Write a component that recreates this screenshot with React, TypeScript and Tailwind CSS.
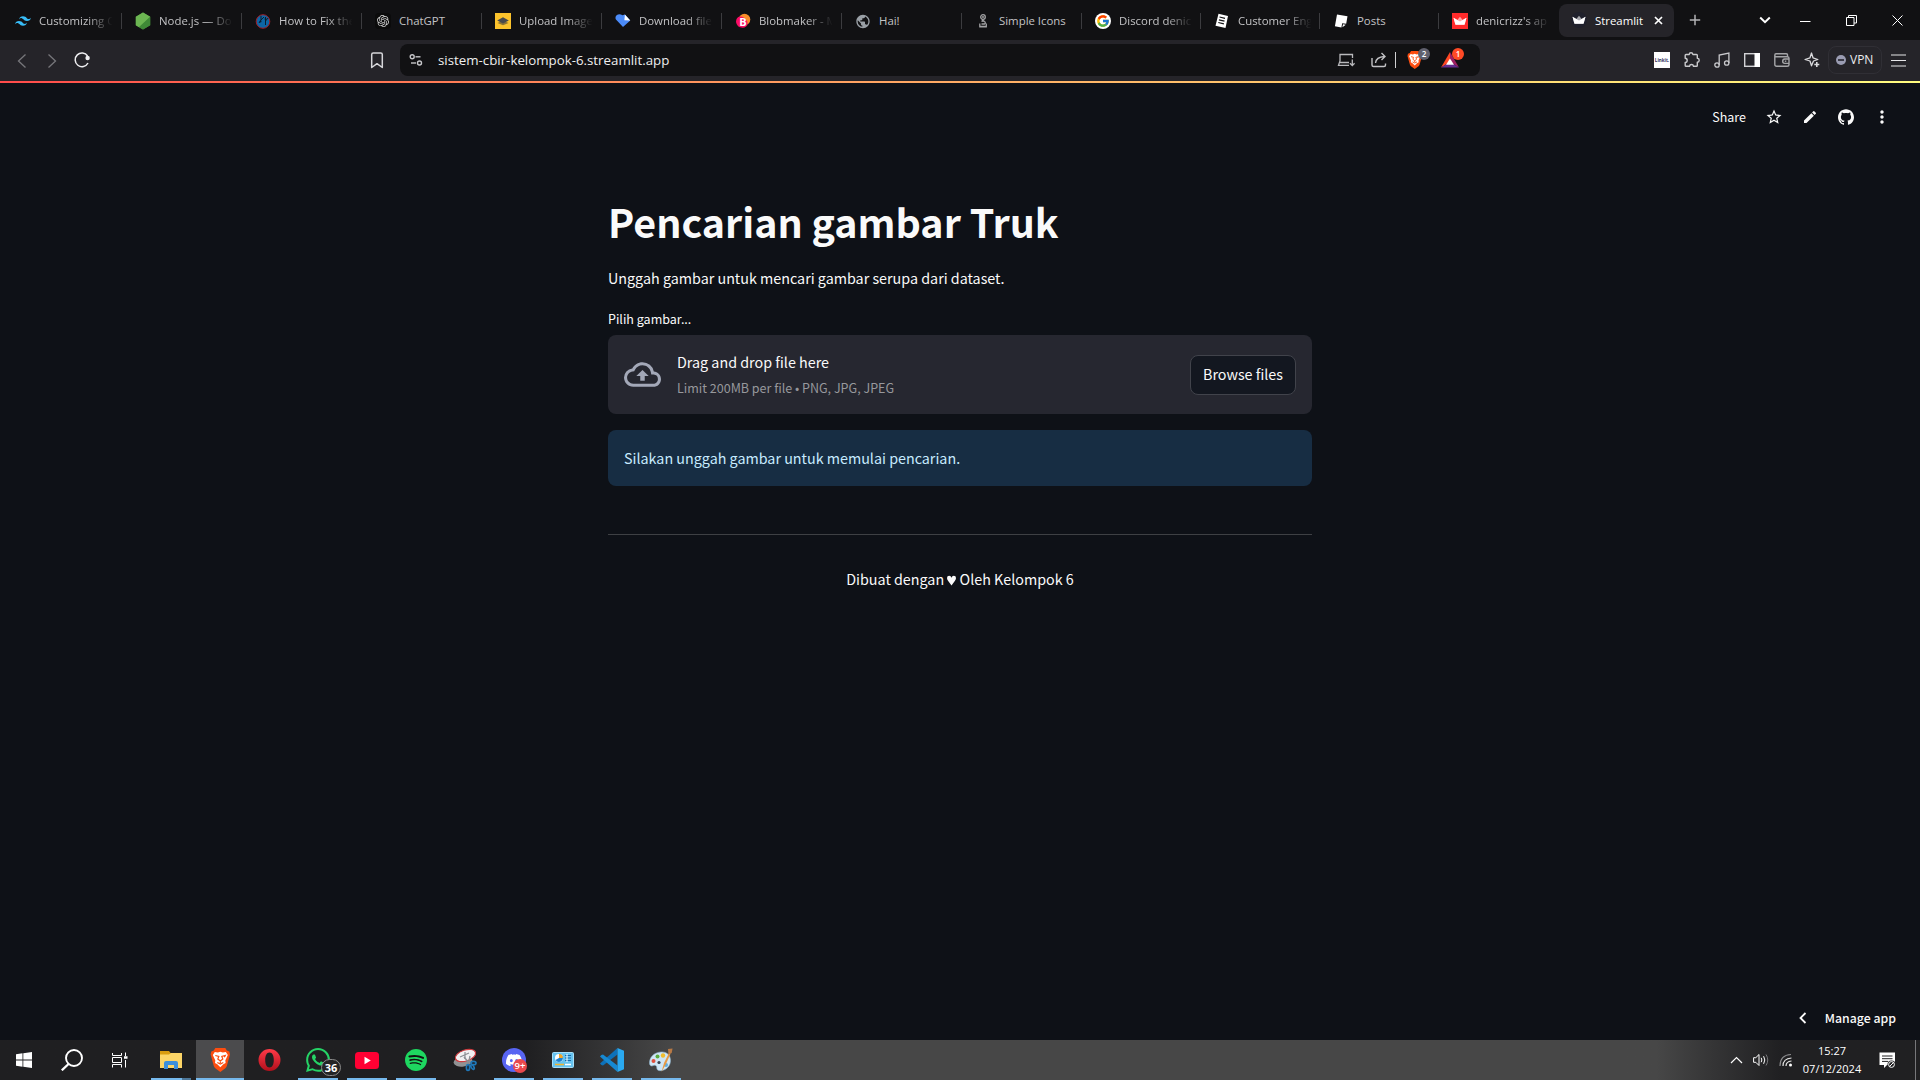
import type { ReactNode } from "react";
import {
  SiTailwindcss,
  SiOpenai,
  SiSpotify,
  SiDiscord,
  SiWhatsapp,
  SiGithub,
} from "react-icons/si";
import { MdOutlineCloudUpload, MdStarBorder, MdEdit, MdMoreVert, MdPublic } from "react-icons/md";
import { FcGoogle } from "react-icons/fc";

/* ---------- Tab favicons ---------- */

const Crown = ({ fill }: { fill: string }) => (
  <svg width="16" height="16" viewBox="0 0 16 16">
    <path d="M1.5 4.8 5.3 7 8 3.8 10.7 7l3.8-2.2-1.8 6.4q-.2.6-.8.6H4.1q-.6 0-.8-.6z" fill={fill} opacity=".75" />
    <path d="M1.500 4.800 8 8.500l6.500-3.700-1.800 6.400q-.2.600-.8.600H4.100q-.6 0-.8-.6z" fill="#fff" />
  </svg>
);

const NodeIcon = () => (
  <svg width="16" height="18" viewBox="0 0 16 18">
    <path d="M8 .5 15.200 4.700v8.600L8 17.500.8 13.300V4.700z" fill="#4c9a3c" />
    <path d="M8 .5 15.200 4.700 4 15.200.8 13.300V4.700z" fill="#6cb652" />
    <path d="M15.200 4.700v8.600L8 17.500 4 15.200z" fill="#3f8a37" />
  </svg>
);

const GlobeRed = () => (
  <svg width="16" height="16" viewBox="0 0 16 16">
    <circle cx="8" cy="8.500" r="6.800" fill="#0d66a5" stroke="#a31d26" strokeWidth="1" />
    <path d="M6 3v4l-2 3M6 7l3-3M10.500 4v8M10.500 8l2.500-3" stroke="#0c1c2c" strokeWidth="1" fill="none" />
    <circle cx="5.500" cy="8.500" r="1" fill="#0c1c2c" />
    <circle cx="10.500" cy="6" r="1" fill="#0c1c2c" />
  </svg>
);

const Upload = () => (
  <svg width="16" height="16" viewBox="0 0 16 16">
    <rect width="16" height="16" fill="#fcc32c" />
    <path d="M8 7.500 13.500 10 8 12.300 2.500 10z" fill="#8d7434" />
    <path d="M8 4.300 13.800 7.500 8 10.500 2.200 7.500z" fill="#494a4c" />
  </svg>
);

const Heart = () => (
  <svg width="17" height="16" viewBox="0 0 17 16">
    <path d="M8.500 14.500 1 6.500Q-.4 3.500 2 1.500 5-.2 8 2l2.500-1 5.700 6.400z" fill="#4b8bf9" />
    <path d="M10.500 1.200 16.200 7.400 10 7.200z" fill="#fff" />
  </svg>
);

const Blob = () => (
  <span className="relative flex h-4 w-4 items-center justify-center">
    <svg className="absolute inset-0" width="16" height="16" viewBox="0 0 16 16">
      <circle cx="9.500" cy="6.500" r="5.800" fill="#f98e2b" />
      <path d="M1 9Q1 4 5 3.500q4.500 0 7 4.500 2 4.500-2.500 6.500Q2 15.500 1 9z" fill="#fb0d63" />
    </svg>
    <span className="relative font-['Open_Sans',sans-serif] text-[11px] leading-none font-bold text-white">B</span>
  </span>
);

const Chain = () => (
  <svg width="16" height="16" viewBox="0 0 16 16" fill="none" stroke="#a2a2a4" strokeWidth="1.300">
    <circle cx="8" cy="4" r="2.300" />
    <circle cx="8" cy="4" r=".4" />
    <path d="M6.800 6.500 9.500 8.500M6.500 8.500q1.500-1 3 0t0 2.500H6.500M4.800 10.500v3h6.500v-3M4.300 13.800h7.500" />
  </svg>
);

const DocIcon = () => (
  <svg width="16" height="16" viewBox="0 0 16 16">
    <path d="M4.500.8 14 3 11.500 15 1.500 12.800z" fill="#fff" />
    <path d="m5.500 4 5.500 1.300M4.900 6.800l5.600 1.300M4.300 9.500l5.600 1.300" stroke="#111113" strokeWidth="1.200" />
  </svg>
);

const PostIcon = () => (
  <svg width="16" height="16" viewBox="0 0 16 16">
    <path d="m4 1.500 10.500 1.800-1.300 7.500-4-.6-.8 4.300-6.500-1.300z" fill="#fff" />
    <path d="m10 11.300 2.800.5-3.400 2.500z" fill="#fff" />
  </svg>
);

type Tab = { title: string; icon: ReactNode; wide: boolean; sep?: boolean };

const tabs: Tab[] = [
  { title: "Customizing C", icon: <SiTailwindcss size={16} color="#38bdf8" />, wide: true },
  { title: "Node.js — Do", icon: <NodeIcon />, wide: true },
  { title: "How to Fix the", icon: <GlobeRed />, wide: true },
  {
    title: "ChatGPT",
    icon: (
      <span className="flex h-4 w-4 items-center justify-center rounded-sm bg-[#0b0b0b]">
        <SiOpenai size={12} color="#d4d4d4" />
      </span>
    ),
    wide: true,
  },
  { title: "Upload Image", icon: <Upload />, wide: true },
  { title: "Download file", icon: <Heart />, wide: true },
  { title: "Blobmaker - M", icon: <Blob />, wide: true },
  { title: "Hai!", icon: <MdPublic size={17} color="#9aa0a6" />, wide: true },
  { title: "Simple Icons", icon: <Chain />, wide: true },
  {
    title: "Discord denic",
    icon: (
      <span className="flex h-4 w-4 items-center justify-center rounded-full bg-white">
        <FcGoogle size={14} />
      </span>
    ),
    wide: false,
  },
  { title: "Customer Eng", icon: <DocIcon />, wide: false },
  { title: "Posts", icon: <PostIcon />, wide: false },
  {
    title: "denicrizz's ap",
    icon: (
      <span className="flex h-4 w-4 items-center justify-center bg-[#ff2b2b]">
        <Crown fill="#ffd0d0" />
      </span>
    ),
    wide: false,
    sep: false,
  },
];

const TabItem = ({ tab }: { tab: Tab }) => (
  <div className={`flex h-10 shrink-0 items-center pt-0.5 pl-[13px] ${tab.wide ? "w-[120px]" : "w-[119px]"}`}>
    <span className="flex h-4 w-4 shrink-0 items-center justify-center">{tab.icon}</span>
    <span
      className={`ml-2 w-[80px] text-[11.4px] leading-4 whitespace-nowrap text-[#c3c3c5] ${
        tab.title.length > 11 && tab.title !== "Simple Icons" ? "mask-r-from-60% mask-r-to-92%" : ""
      }`}
    >
      {tab.title}
    </span>
    {tab.sep !== false && <span className="ml-auto h-4 w-px bg-[#3c3c3f]" />}
  </div>
);

const TabStrip = () => (
  <div className="flex h-10 shrink-0 items-center bg-[#111113] pl-0.5">
    {tabs.map((t) => (
      <TabItem key={t.title} tab={t} />
    ))}
    <div className="ml-px flex h-[33px] w-[115px] items-center rounded-lg bg-[#252429] pl-3">
      <span className="flex h-4 w-4 items-center justify-center rounded-full bg-[#20212c]">
        <Crown fill="#d5d5da" />
      </span>
      <span className="mt-px ml-2 text-[11.4px] leading-4 text-white">Streamlit</span>
      <svg className="mt-px mr-[11px] ml-auto" width="9" height="9" viewBox="0 0 9 9">
        <path d="m1 1 7 7M8 1 1 8" stroke="#fff" strokeWidth="1.700" />
      </svg>
    </div>
    <svg className="ml-[15px]" width="12" height="12" viewBox="0 0 12 12">
      <path d="M6 .8v10.400M.8 6h10.400" stroke="#b3b3b5" strokeWidth="1.500" />
    </svg>
    <div className="ml-auto flex items-center">
      <svg className="mr-[29px]" width="12" height="12" viewBox="0 0 12 12" fill="none">
        <path d="m1.200 3.500 4.800 4.700 4.800-4.700" stroke="#fff" strokeWidth="2" />
      </svg>
      <svg className="mr-[35px]" width="11" height="11" viewBox="0 0 11 11">
        <path d="M0 6.500h10.500" stroke="#fff" />
      </svg>
      <svg className="mr-[35px]" width="11" height="11" viewBox="0 0 11 11" fill="none" stroke="#fff">
        <path d="M.5 2.500h7.500v8H.5zM2.500 2.500v-2h8v7.500H8" />
      </svg>
      <svg className="mr-[17px]" width="11" height="11" viewBox="0 0 11 11">
        <path d="m.5.5 10 10M10.500.5l-10 10" stroke="#fff" />
      </svg>
    </div>
  </div>
);

/* ---------- Browser toolbar ---------- */

const Cell = ({ children }: { children: ReactNode }) => (
  <span className="flex h-full w-[30px] shrink-0 items-center justify-center">{children}</span>
);

const BraveShield = ({ size }: { size: number }) => (
  <svg width={size * 0.86} height={size} viewBox="0 0 20 24">
    <path d="m5 0-1.500 2.500L1 3.500.3 6.500 3.500 18q.5 1.500 1.500 2.200L10 24l5-3.800q1-.7 1.500-2.200L19.700 6.500 19 3.500l-2.500-1L15 0z" fill="#fb4d10" />
    <path d="m4.500 4 3 .5L10 3.800l2.500.7 3-.5 2 3-2.500 5.500.3 2.500-2.300 1.200-3 3-3-3L4.700 15l.3-2.500L2.500 7z" fill="#fff" />
    <path d="m5 7.500 3.500 1-1 2.500L10 13l2.500-2-1-2.500 3.500-1-1 1.800M10 13v2M7 14.500l3 1.500 3-1.500" fill="none" stroke="#fb4d10" strokeWidth="1.200" />
  </svg>
);

const Toolbar = () => (
  <div className="flex h-[41px] shrink-0 items-center bg-[#252429] pr-[7px] pl-[7px]">
    <Cell>
      <svg width="14" height="16" viewBox="0 0 14 16" fill="none">
        <path d="M10.500 1.500 3.500 8l7 6.500" stroke="#77777b" strokeWidth="1.300" />
      </svg>
    </Cell>
    <Cell>
      <svg width="14" height="16" viewBox="0 0 14 16" fill="none">
        <path d="M3.500 1.500 10.500 8l-7 6.500" stroke="#77777b" strokeWidth="1.300" />
      </svg>
    </Cell>
    <Cell>
      <svg className="mb-px" width="18" height="18" viewBox="0 0 18 18" fill="none">
        <path d="M14.600 5A6.800 6.800 0 1 0 15 12" stroke="#eeeef0" strokeWidth="1.500" />
        <circle cx="14.600" cy="7" r="2.200" fill="#eeeef0" />
      </svg>
    </Cell>
    <span className="ml-[265px] flex w-[30px] justify-center">
      <svg className="mb-px" width="14" height="17" viewBox="0 0 14 17" fill="none">
        <path d="M1.700 2.500q0-1.500 1.500-1.500h7.600q1.500 0 1.500 1.500v13L7 11.700 1.700 15.500z" stroke="#d6d6da" strokeWidth="1.500" strokeLinejoin="round" />
      </svg>
    </span>
    <div className="mb-px ml-2 flex h-8 w-[1080px] items-center rounded-lg bg-[#111113] pr-[13px]">
      <span className="flex w-[31px] justify-center">
        <svg width="14" height="14" viewBox="0 0 14 14" fill="none" stroke="#c6c6c9" strokeWidth="1.400">
          <circle cx="3.200" cy="3.800" r="2" />
          <path d="M6.500 3.800h5" />
          <circle cx="10.500" cy="10" r="2" />
          <path d="M2 10h5" />
        </svg>
      </span>
      <span className="ml-[7px] text-[13.3px] leading-5 text-[#efefef]">sistem-cbir-kelompok-6.streamlit.app</span>
      <span className="ml-auto flex w-[33px] justify-center">
        <svg width="18" height="14" viewBox="0 0 18 14" fill="none" stroke="#b9b9bc" strokeWidth="1.300">
          <path d="M15.500 5V1.500H3V8L1.500 12.400h10.500M3 9.500H12M15.300 6.500v6M13 10.300l2.300 2.300 2.300-2.300" />
        </svg>
      </span>
      <span className="flex w-[33px] justify-center pl-px">
        <svg width="18" height="16" viewBox="0 0 18 16" fill="none" stroke="#c2c2c5" strokeWidth="1.400">
          <path d="M2 6v7q0 1.500 1.500 1.500h10.500q1.500 0 1.500-1.500v-1.500M5.500 11Q6 5 14.500 4.500M11.500 1l3.500 3.500L11.500 8" />
        </svg>
      </span>
      <span className="h-4 w-px bg-[#cfcfd1]" />
      <span className="relative flex w-[37px] justify-center pl-px">
        <BraveShield size={18} />
        <span className="absolute -top-[3px] left-[22px] flex h-3 w-3 items-center justify-center rounded-full bg-[#60606d] text-[8px] leading-none font-semibold text-white">
          2
        </span>
      </span>
      <span className="relative flex w-[34px] justify-center">
        <svg width="18" height="16" viewBox="0 0 18 16">
          <path d="M9 0 0 15.500 9 10z" fill="#ff4724" />
          <path d="M9 0 18 15.500 9 10z" fill="#9e1f63" />
          <path d="M0 15.500h18L9 10z" fill="#662d91" />
          <path d="m9 6.500 4 6.200H5z" fill="#fff" />
        </svg>
        <span className="absolute -top-1 left-[19px] flex h-3 w-3 items-center justify-center rounded-full bg-[#ff4a26] text-[8px] leading-none font-semibold text-white">
          1
        </span>
      </span>
    </div>
    <div className="ml-auto flex h-full items-center pb-px">
      <Cell>
        <span className="flex h-4 w-4 items-center justify-center bg-white text-[4.5px] leading-none font-bold text-[#2f2c57]">
          Linkit.
        </span>
      </Cell>
      <Cell>
        <svg width="16" height="16" viewBox="0 0 16 16" fill="none" stroke="#c9c9cc" strokeWidth="1.400" strokeLinejoin="round">
          <path d="M2 2.500H5.200Q5.300.8 7 .8t1.900 1.700H12.500q.8 0 .8.800V6.300q1.900.1 1.900 1.900T13.300 10.200v3.300q0 .8-.8.8H9.500Q9.300 12.500 7.500 12.500T5.500 14.300H2q-.8 0-.8-.8V10.500q2-.2 2-2.100t-2-2.100V3.300q0-.8.8-.8z" />
        </svg>
      </Cell>
      <Cell>
        <svg width="16" height="16" viewBox="0 0 16 16" fill="none" stroke="#c9c9cc" strokeWidth="1.300">
          <circle cx="3" cy="13" r="2.200" />
          <circle cx="12.700" cy="11" r="2.200" />
          <path d="M5.200 13V3l9.700-2v10" />
        </svg>
      </Cell>
      <Cell>
        <svg width="16" height="14" viewBox="0 0 16 14">
          <rect x=".7" y=".7" width="14.600" height="12.600" fill="none" stroke="#d2d2d5" strokeWidth="1.400" />
          <rect x="10.500" y="0" width="5.500" height="14" fill="#fff" />
        </svg>
      </Cell>
      <Cell>
        <svg width="16" height="14" viewBox="0 0 16 14" fill="none" stroke="#a5a5a8" strokeWidth="1.400">
          <path d="M13.500 3.500V2q0-1.200-1.200-1.200H2Q.8.800.8 2.200T2 3.700h11.200q1.800 0 1.800 1.500v6.500q0 1.500-1.800 1.500H2.600Q.8 13.200.8 11.500V2.500M15 6h-4.300q-2 .2-2 2.200t2 2.200H15" />
          <path d="M10.800 8.200h1.500" />
        </svg>
      </Cell>
      <Cell>
        <svg width="16" height="16" viewBox="0 0 16 16" fill="none" stroke="#dadadd" strokeWidth="1.300" strokeLinejoin="round">
          <path d="M7.500 1 9 5.800 13.800 7.500 9.500 9 7.500 13.800 6 9 1 7.500 6 5.800z" />
          <path d="M12.800 10v5M10.300 12.500h5" strokeWidth="1.600" />
        </svg>
      </Cell>
      <div className="ml-px flex h-7 w-[54px] items-center rounded-lg border border-[#302f35] pl-[7px]">
        <span className="flex h-2.5 w-2.5 items-center justify-center rounded-full bg-[#9a9cb2]">
          <span className="h-0.5 w-1.5 bg-[#3a3a46]" />
        </span>
        <span className="ml-1 text-[12px] leading-4 text-[#ececee]">VPN</span>
      </div>
      <span className="ml-px flex w-[30px] justify-center">
        <svg width="15" height="13" viewBox="0 0 15 13">
          <path d="M0 1h15M0 6.500h15M0 12h15" stroke="#e6e6e8" strokeWidth="1.200" />
        </svg>
      </span>
    </div>
  </div>
);

/* ---------- Streamlit page ---------- */

const Page = () => (
  <main className="flex h-[959px] shrink-0 flex-col bg-[#0e1117] font-['Noto_Sans_CJK_JP','Open_Sans',sans-serif] text-[#fafafa]">
    <div className="h-0.5 shrink-0 bg-linear-to-r from-[#ff4b4b] to-[#fffd80]" />
    <header className="flex h-[68px] shrink-0 items-center justify-end pr-7">
      <span className="text-[12.5px] leading-5">Share</span>
      <span className="ml-[18px] flex w-5 justify-center">
        <MdStarBorder size={18} />
      </span>
      <span className="ml-4 flex w-5 justify-center">
        <MdEdit size={16} />
      </span>
      <span className="ml-4 flex w-5 justify-center">
        <SiGithub size={16} />
      </span>
      <span className="ml-4 flex w-5 justify-center">
        <MdMoreVert size={20} />
      </span>
    </header>
    <section className="mx-auto flex w-[704px] flex-col pt-[43px]">
      <h1 className="text-[39.4px] leading-[53px] font-bold">Pencarian gambar Truk</h1>
      <p className="mt-[18px] text-[14.32px] leading-[26px]">Unggah gambar untuk mencari gambar serupa dari dataset.</p>
      <label className="mt-[18px] text-[12.52px] leading-5">Pilih gambar...</label>
      <div className="mt-1.5 flex h-[79px] items-center rounded-lg bg-[#262730] px-4">
        <MdOutlineCloudUpload size={37} color="#a3a8b8" />
        <div className="ml-4 flex flex-col pt-px">
          <span className="text-[14.32px] leading-[26px]">Drag and drop file here</span>
          <span className="text-[12.52px] leading-[26px] text-[#97989c]">Limit 200MB per file • PNG, JPG, JPEG</span>
        </div>
        <button className="ml-auto flex h-10 w-[106px] items-center justify-center rounded-lg border border-[#41434b] bg-[#131720] pb-px text-[14.32px]">
          Browse files
        </button>
      </div>
      <div className="mt-4 flex h-14 items-center rounded-lg bg-[#172d43] px-4 text-[14.32px] text-[#c7ebff]">
        Silakan unggah gambar untuk memulai pencarian.
      </div>
      <hr className="mt-12 border-[#3e4044]" />
      <p className="mt-[31px] text-center text-[14.32px] leading-[26px]">
        Dibuat dengan{" "}
        <svg className="inline-block align-[-1px]" width="9" height="11" viewBox="0 0 9 11">
          <path d="M4.500 10.500 1.200 6Q0 4.300 0 3 0 .8 2.200.8 4 .8 4.500 2.800 5 .8 6.800.8 9 .8 9 3q0 1.300-1.200 3z" fill="#fafafa" />
        </svg>{" "}
        Oleh Kelompok 6
      </p>
    </section>
    <div className="mt-auto flex h-[45px] items-center justify-end pr-6">
      <svg className="mr-[18px]" width="8" height="12" viewBox="0 0 8 12" fill="none">
        <path d="M6.500 1 1.500 6l5 5" stroke="#fafafa" strokeWidth="1.800" />
      </svg>
      <span className="text-[12.3px] leading-5 font-medium">Manage app</span>
    </div>
  </main>
);

/* ---------- Windows taskbar ---------- */

const Explorer = () => (
  <svg width="22" height="18" viewBox="0 0 22 18">
    <path d="M0 0h9l1.500 2H22v15H0z" fill="#d99c0f" />
    <path d="M0 3.500h9l2-1.500h11v15H0z" fill="#fcd567" />
    <path d="M4 18v-6q0-2 2-2h10q2 0 2 2v6h-4v-4H8v4z" fill="#3c8fdb" />
  </svg>
);

const Opera = () => (
  <svg width="23" height="22" viewBox="0 0 23 22">
    <defs>
      <linearGradient id="operaRing" x1="0" y1="0" x2="0" y2="1">
        <stop offset="0" stopColor="#ff3a48" />
        <stop offset="1" stopColor="#b1101c" />
      </linearGradient>
    </defs>
    <path fillRule="evenodd" d="M11.500 0a11 11 0 1 0 0 22 11 11 0 1 0 0-22zm0 3.500c3 0 4.300 3.500 4.300 7.500s-1.300 7.500-4.300 7.500S7.200 15 7.200 11s1.300-7.500 4.300-7.500z" fill="url(#operaRing)" />
  </svg>
);

const YouTube = () => (
  <svg width="24" height="17" viewBox="0 0 24 17">
    <rect width="24" height="17" rx="3.500" fill="#ff0033" />
    <path d="m9.500 4.800 6.300 3.700-6.300 3.700z" fill="#fff" />
  </svg>
);

const Snip = () => (
  <svg width="24" height="24" viewBox="0 0 24 24">
    <ellipse cx="10" cy="13.500" rx="9.500" ry="5" fill="#909294" transform="rotate(-8 10 13.500)" />
    <ellipse cx="12.500" cy="7.500" rx="10.500" ry="5.500" fill="#f1f1f2" stroke="#cf3c40" strokeWidth="1.200" transform="rotate(-18 12.500 7.500)" />
    <path d="m7 9 9-4M12 4v7" stroke="#8b8f94" strokeWidth="1.200" />
    <path d="m11 9 6 7M17 8l-1.500 8" stroke="#8b8f94" strokeWidth="1.400" />
    <g fill="none" stroke="#1f77b8" strokeWidth="1.700">
      <ellipse cx="20.500" cy="15" rx="2.500" ry="1.700" />
      <ellipse cx="15" cy="19.500" rx="1.600" ry="3" />
      <ellipse cx="19.500" cy="19" rx="1.300" ry="2.500" transform="rotate(-30 19.500 19)" />
    </g>
  </svg>
);

const ControlPanel = () => (
  <svg width="22" height="16" viewBox="0 0 22 16">
    <rect x=".5" y=".5" width="21" height="15" rx="1" fill="#66c3ef" stroke="#a8dff8" />
    <circle cx="7" cy="6" r="4" fill="#fff" />
    <path d="M7 6V2a4 4 0 1 1-3.500 6z" fill="#1d80cf" />
    <path d="M7 6V2a4 4 0 0 1 3.900 4z" fill="#f6a623" />
    <path d="M13 3.500h6M13 6h6M13 8.500h6" stroke="#1768a8" strokeWidth="1.200" />
    <path d="M15 2v8" stroke="#fff" />
    <path d="M3 12.500h9" stroke="#f2b632" strokeWidth="1.500" />
    <path d="M13 12.500h6" stroke="#fff" strokeWidth="1.500" />
  </svg>
);

const VsCode = () => (
  <svg width="24" height="24" viewBox="0 0 24 24">
    <path d="M17.500 0v6.500L3 17.500 1.300 17 0 15.500z" fill="#0d71b9" />
    <path d="M17.500 24v-6.500L3 6.500 1.300 7 0 8.500z" fill="#1689d2" />
    <path d="M17.500 0 24 2.800v18.400L17.500 24z" fill="#2aa9f0" />
  </svg>
);

const Paint = () => (
  <svg width="24" height="24" viewBox="0 0 24 24">
    <path d="M12 4C4.500 4.500.5 9.500.5 15c0 3 2 3.500 4 2.500s3.500.5 3.300 2.500 2 3.200 5.200 2.500c5-1 8.500-5 8.500-10C21.500 7 17.500 3.600 12 4z" fill="#cfe6f5" stroke="#8fb4cd" strokeWidth=".6" />
    <circle cx="4.500" cy="13" r="2" fill="#e0503c" />
    <circle cx="8.500" cy="8.500" r="2" fill="#5aac3e" />
    <circle cx="14" cy="7.500" r="2.200" fill="#f1bd2e" />
    <circle cx="10" cy="14.500" r="1.600" fill="#39424e" />
    <circle cx="17" cy="17" r="2" fill="#5eaee2" />
    <path d="m12.500 24 2.500-9 5-10 1.500.8L17 16z" fill="#e79a45" />
    <path d="m19 1 4.500-.5-.8 4.500-3.200 1.500z" fill="#b87945" />
  </svg>
);

type TaskItem = { id: string; icon: ReactNode; state: "none" | "open" | "active" | "multi" };

const tasks: TaskItem[] = [
  { id: "explorer", icon: <Explorer />, state: "multi" },
  { id: "brave", icon: <BraveShield size={24} />, state: "active" },
  { id: "opera", icon: <Opera />, state: "none" },
  {
    id: "whatsapp",
    icon: (
      <span className="relative">
        <SiWhatsapp size={24} color="#25d366" />
        <span className="absolute top-[11px] left-[15px] flex h-[17px] w-5 items-center justify-center rounded-full border border-[#8a8a8a] bg-[#242426] text-[11px] leading-none font-bold text-white">
          36
        </span>
      </span>
    ),
    state: "open",
  },
  { id: "youtube", icon: <YouTube />, state: "open" },
  {
    id: "spotify",
    icon: (
      <span className="rounded-full bg-[#121212]">
        <SiSpotify size={22} color="#1ed760" />
      </span>
    ),
    state: "open",
  },
  { id: "snip", icon: <Snip />, state: "none" },
  {
    id: "discord",
    icon: (
      <span className="relative flex h-6 w-6 items-center justify-center rounded-full bg-[#5865f2]">
        <SiDiscord size={16} color="#fff" />
        <span className="absolute top-[11px] left-[11px] flex h-[14px] w-[14px] items-center justify-center rounded-full bg-[#e9484d] text-[9.5px] leading-none font-semibold text-white">
          9+
        </span>
      </span>
    ),
    state: "open",
  },
  { id: "panel", icon: <ControlPanel />, state: "open" },
  { id: "vscode", icon: <VsCode />, state: "open" },
  { id: "paint", icon: <Paint />, state: "open" },
];

const TaskButton = ({ item }: { item: TaskItem }) => (
  <div className="flex h-10 w-[49px] shrink-0 justify-start">
    <div className={`flex h-10 w-12 flex-col items-center ${item.state === "active" ? "bg-[#4b4b4d]" : ""}`}>
      <span className="flex h-[38px] items-center justify-center pt-0.5">{item.icon}</span>
      {item.state === "active" && <span className="h-0.5 w-full bg-[#76b9ed]" />}
      {item.state === "open" && <span className="h-0.5 w-10 bg-[#76b9ed]" />}
      {item.state === "multi" && (
        <span className="flex h-0.5 w-10">
          <span className="w-[31px] bg-[#76b9ed]" />
          <span className="w-[9px] bg-[#4d7799]" />
        </span>
      )}
    </div>
  </div>
);

const Taskbar = () => (
  <footer className="flex h-10 shrink-0 items-center bg-[#474747]">
    <div className="flex h-10 w-[730px] shrink-0 items-center bg-linear-to-r from-[#1f1f21] from-72% to-[#474747] to-92%">
      <span className="flex w-12 justify-center">
        <svg width="16" height="16" viewBox="0 0 16 16" fill="#fff">
          <path d="M0 2.200 6.500 1.300v6.300H0zM7.300 1.200 16 0v7.600H7.300zM0 8.400h6.500v6.300L0 13.800zM7.300 8.400H16V16l-8.700-1.200z" />
        </svg>
      </span>
      <span className="flex w-12 justify-center">
        <svg width="22" height="22" viewBox="0 0 22 22" fill="none" stroke="#fff">
          <circle cx="13" cy="9" r="8" strokeWidth="1.900" />
          <path d="M7.500 15 .8 21.300" strokeWidth="2.300" />
        </svg>
      </span>
      <span className="flex w-12 justify-center pr-px">
        <svg width="17" height="16" viewBox="0 0 17 16" fill="none" stroke="#fff">
          <path d="M1.500 5.500h9v5h-9zM1.500 1v2.500h9V1M1.500 15.500v-3h9v3M14.500.5v3.500M14.500 8v7.500" />
          <path d="M13 5.500h3.500" strokeWidth="2.500" />
        </svg>
      </span>
      <div className="ml-[3px] flex">
        {tasks.map((t) => (
          <TaskButton key={t.id} item={t} />
        ))}
      </div>
    </div>
    <div className="ml-auto flex h-10 w-[310px] items-center justify-end bg-linear-to-r from-[#474747] from-15% to-[#202022] to-55%">
      <svg className="mr-2.5" width="13" height="8" viewBox="0 0 13 8" fill="none">
        <path d="m1 7 5.500-5.500L12 7" stroke="#fff" strokeWidth="1.200" />
      </svg>
      <svg className="mr-[9px]" width="17" height="14" viewBox="0 0 17 14" fill="none" stroke="#fff">
        <path d="M.6 4.700h2.200L6 1.500v11L2.800 9.300H.6z" />
        <path d="M8.200 4.800q1.300 2.200 0 4.400M10.600 3.200q2.400 3.800 0 7.600" />
        <path d="M13 1.500q3.500 5.500 0 11" stroke="#77777a" />
      </svg>
      <svg className="mr-2" width="14" height="14" viewBox="0 0 14 14" fill="none">
        <path d="M1 13Q1 2 12 1.500" stroke="#8b8b8d" strokeWidth="1.200" />
        <path d="M4 13q0-7.500 8.500-8M7 13q0-4.500 5.500-5" stroke="#e5e5e5" strokeWidth="1.200" />
        <circle cx="11.500" cy="12" r="1.500" fill="#fff" />
      </svg>
      <div className="flex w-[62px] flex-col items-center text-[11px] leading-[18px] text-white">
        <span>15:27</span>
        <span>07/12/2024</span>
      </div>
      <svg className="mr-[19px] ml-4" width="17" height="17" viewBox="0 0 17 17">
        <path d="M.5.5h15.500V13H8l-3 3v-3H.5z" fill="#fff" />
        <path d="M3 4h10.500M3 6.700h10.500M3 9.400h6" stroke="#222224" />
        <circle cx="12.500" cy="12.500" r="4" fill="#222224" />
        <circle cx="12.500" cy="12.500" r="2.900" fill="none" stroke="#fff" />
        <path d="m10.500 14.500 4-4" stroke="#fff" />
      </svg>
      <span className="mr-1 h-10 w-px bg-[#77777a]" />
    </div>
  </footer>
);

export default function App() {
  return (
    <div className="flex h-[1080px] w-[1920px] flex-col overflow-hidden bg-[#0e1117] font-['Open_Sans','Noto_Sans',sans-serif]">
      <TabStrip />
      <Toolbar />
      <Page />
      <Taskbar />
    </div>
  );
}
